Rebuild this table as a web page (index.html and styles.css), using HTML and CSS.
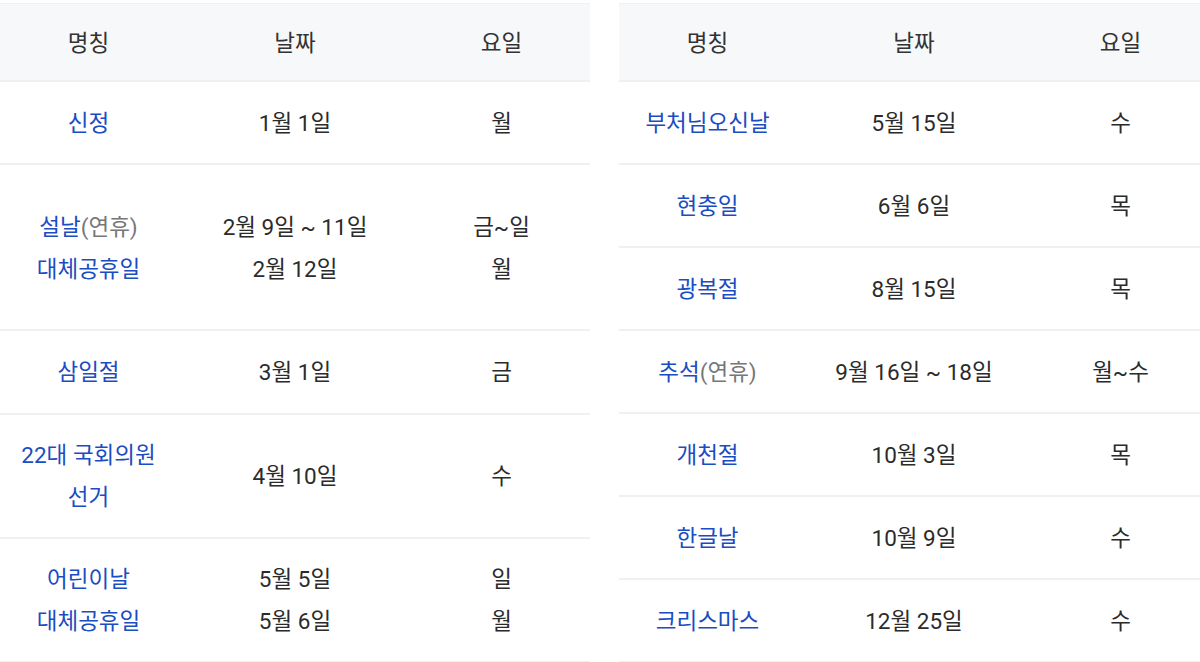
FILE: index.html
```html
<!DOCTYPE html>
<html lang="ko">
<head>
<meta charset="utf-8">
<link rel="stylesheet" href="styles.css">
</head>
<body>
<div class="wrap">
  <table class="tbl">
    <thead>
      <tr><th>명칭</th><th>날짜</th><th>요일</th></tr>
    </thead>
    <tbody>
      <tr class="r1"><td class="nm">신정</td><td>1월 1일</td><td>월</td></tr>
      <tr class="r3"><td class="nm">설날<span class="sub">(연휴)</span><br>대체공휴일</td><td>2월 9일 ~ 11일<br>2월 12일</td><td>금~일<br>월</td></tr>
      <tr class="r1"><td class="nm">삼일절</td><td>3월 1일</td><td>금</td></tr>
      <tr class="r2"><td class="nm">22대 국회의원<br>선거</td><td>4월 10일</td><td>수</td></tr>
      <tr class="r2"><td class="nm">어린이날<br>대체공휴일</td><td>5월 5일<br>5월 6일</td><td>일<br>월</td></tr>
    </tbody>
  </table>
  <table class="tbl">
    <thead>
      <tr><th>명칭</th><th>날짜</th><th>요일</th></tr>
    </thead>
    <tbody>
      <tr class="r1"><td class="nm">부처님오신날</td><td>5월 15일</td><td>수</td></tr>
      <tr class="r1"><td class="nm">현충일</td><td>6월 6일</td><td>목</td></tr>
      <tr class="r1"><td class="nm">광복절</td><td>8월 15일</td><td>목</td></tr>
      <tr class="r1"><td class="nm">추석<span class="sub">(연휴)</span></td><td>9월 16일 ~ 18일</td><td>월~수</td></tr>
      <tr class="r1"><td class="nm">개천절</td><td>10월 3일</td><td>목</td></tr>
      <tr class="r1"><td class="nm">한글날</td><td>10월 9일</td><td>수</td></tr>
      <tr class="r1"><td class="nm">크리스마스</td><td>12월 25일</td><td>수</td></tr>
    </tbody>
  </table>
</div>
</body>
</html>
```
FILE: styles.css
```css
html, body {
  margin: 0;
  padding: 0;
  background: #ffffff;
}
body {
  font-family: Roboto, "Noto Sans CJK KR", "Noto Sans", sans-serif;
  color: #2b2b2b;
  overflow: hidden;
}
.wrap {
  display: flex;
  gap: 29px;
  padding-top: 3px;
  width: 1300px;
}
.tbl {
  width: 590px;
  flex: 0 0 590px;
  border-collapse: collapse;
  table-layout: fixed;
  font-size: 22.5px;
  line-height: 42px;
}
.tbl th, .tbl td {
  text-align: center;
  vertical-align: middle;
  padding: 1px 0 0;
  border-bottom: 2px solid #eef0f3;
}
.tbl th:nth-child(1), .tbl td:nth-child(1) { width: 30%; }
.tbl th:nth-child(2), .tbl td:nth-child(2) { width: 40%; }
.tbl th:nth-child(3), .tbl td:nth-child(3) { width: 30%; }
.tbl thead tr {
  background: #f7f8fa;
}
.tbl th {
  font-weight: 400;
  height: 75px;
  border-top: 1px solid #eef0f3;
  color: #333333;
}
.tbl tr.r1 td { height: 80px; }
.tbl tr.r2 td { height: 121px; }
.tbl tr.r3 td { height: 163px; }
.nm {
  color: #1a4cc2;
}
.sub {
  color: #777777;
}
```
